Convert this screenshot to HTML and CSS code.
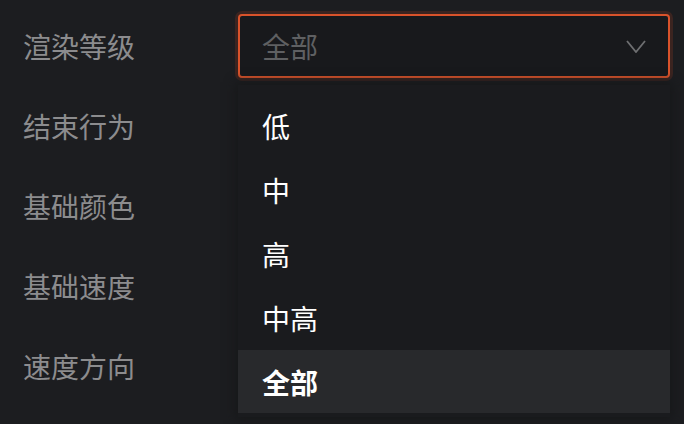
FILE: index.html
```html
<!DOCTYPE html>
<html lang="zh-CN">

<head>
    <meta charset="UTF-8">
    <meta name="viewport" content="width=device-width, initial-scale=1.0">
    <title>渲染设置</title>
    <link rel="stylesheet" href="styles.css">
</head>

<body>
    <div class="form">
        <div class="row">
            <div class="label">渲染等级</div>
            <div class="select open">
                <div class="value">全部</div>
                <svg class="arrow" width="20" height="13" viewBox="0 0 20 13">
                    <polyline points="1,1 10,12 19,1" fill="none" stroke="#6e6f71" stroke-width="1.8" />
                </svg>
                <!-- 下拉列表 -->
                <ul class="menu">
                    <li>低</li>
                    <li>中</li>
                    <li>高</li>
                    <li>中高</li>
                    <li class="active">全部</li>
                </ul>
            </div>
        </div>
        <div class="row">
            <div class="label">结束行为</div>
        </div>
        <div class="row">
            <div class="label">基础颜色</div>
        </div>
        <div class="row">
            <div class="label">基础速度</div>
        </div>
        <div class="row">
            <div class="label">速度方向</div>
        </div>
    </div>
</body>

</html>
```

FILE: styles.css
```css
* {
    margin: 0;
    padding: 0;
    box-sizing: border-box;
}

html,
body {
    height: 100%;
}

body {
    background-color: #1c1d20;
    font-family: "Noto Sans CJK SC", "Noto Sans", sans-serif;
    font-size: 28px;
}

ul {
    list-style: none;
}

.form {
    padding: 6px 14px 0 23px;
}

.row {
    display: flex;
    align-items: center;
    height: 80px;
}

.label {
    width: 215px;
    color: #8c8c8e;
    line-height: 1;
}

.select {
    position: relative;
    display: flex;
    align-items: center;
    justify-content: space-between;
    width: 432px;
    height: 64px;
    padding: 0 22px 0 22px;
    border: 2px solid #d9532b;
    border-radius: 4px;
    background-color: #18191c;
    box-shadow: 0 0 0 3px #3b2420;
}

.value {
    color: #5f6062;
    line-height: 1;
}

.arrow {
    display: block;
}

.menu {
    position: absolute;
    z-index: 10;
    top: 69px;
    left: -2px;
    width: 432px;
    padding: 9px 0 4px;
    background-color: #1a1b1e;
    box-shadow: 0 0 10px 3px #17181a;
}

.menu li {
    display: flex;
    align-items: center;
    height: 64px;
    padding-left: 24px;
    color: #ffffff;
    line-height: 1;
}

.menu li.active {
    height: 63px;
    font-weight: bold;
    background-color: #28292c;
}
```
